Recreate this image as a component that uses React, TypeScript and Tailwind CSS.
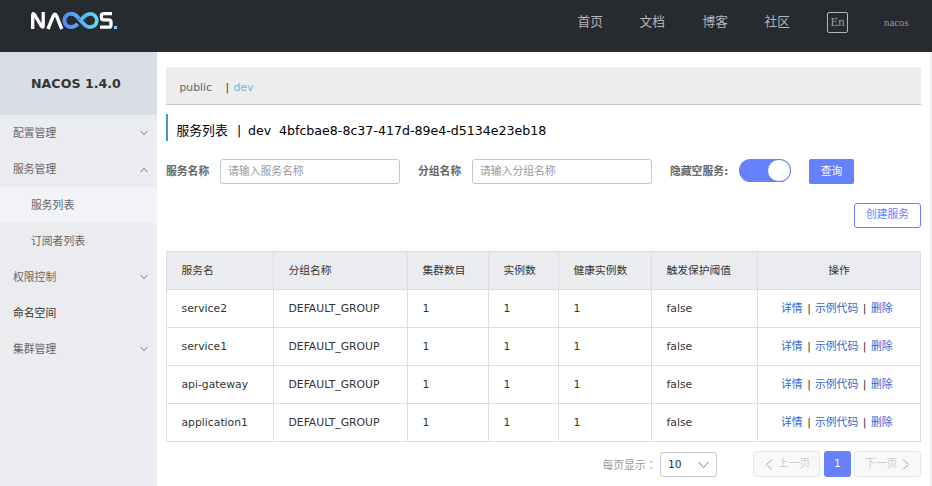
import React from "react";

const sans = "font-['DejaVu_Sans','Noto_Sans_CJK_SC',sans-serif]";

function Logo() {
  return (
    <svg width="88" height="20" viewBox="0 0 88 20" fill="none" className="block">
      <defs>
        <linearGradient id="loop" gradientUnits="userSpaceOnUse" x1="33" y1="0" x2="69" y2="0">
          <stop offset="0" stopColor="#5688f8" />
          <stop offset="0.5" stopColor="#5aaef6" />
          <stop offset="1" stopColor="#5fe0ee" />
        </linearGradient>
      </defs>
      <path d="M2.7 19V5.2Q2.7 2.4 4.6 4.6L11.2 15.8Q13.2 18.6 13.2 15.8V2" stroke="#fff" strokeWidth="3.3" />
      <path d="M18 19L23.2 6.2Q24.9 2 26.6 6.2L31.8 19" stroke="#fff" strokeWidth="3.4" />
      <path
        d="M47.6 13.9Q44.6 17.1 41 17.1A6.6 6.6 0 0 1 41 3.8Q44.6 3.8 47.4 6.9L49 8.6"
        stroke="url(#loop)"
        strokeWidth="3.9"
      />
      <path
        d="M50.3 10.4L53.8 6.9Q56.8 3.8 60.2 3.8A6.6 6.6 0 0 1 60.2 17.1Q56.8 17.1 53.8 13.9L50.3 10.4Z"
        stroke="url(#loop)"
        strokeWidth="3.7"
      />
      <path d="M82 3.7H73.8Q71.4 3.7 71.4 6V7.6Q71.4 9.9 73.8 9.9H78.6Q81 9.9 81 12.3V14.9Q81 17.2 78.6 17.2H70" stroke="#fff" strokeWidth="3.3" />
      <rect x="84" y="16" width="3" height="3" fill="#5fe0ee" />
    </svg>
  );
}

type ArrowProps = { d: string; w: number; h: number; color: string };
function Arrow({ d, w, h, color }: ArrowProps) {
  return (
    <svg width={w} height={h} viewBox={`0 0 ${w} ${h}`} fill="none" stroke={color} className="block shrink-0">
      <path d={d} />
    </svg>
  );
}

const menu = [
  { text: "配置管理", kind: "down" },
  { text: "服务管理", kind: "up" },
  { text: "服务列表", kind: "active" },
  { text: "订阅者列表", kind: "sub" },
  { text: "权限控制", kind: "down" },
  { text: "命名空间", kind: "plain" },
  { text: "集群管理", kind: "down" },
];

function Sidebar() {
  return (
    <aside className="w-[157px] shrink-0 bg-[#ebecf0]">
      <div className="flex h-[63px] items-center bg-[#d9dde6] pl-[31px] text-[12.65px] font-bold text-[#333]">NACOS 1.4.0</div>
      {menu.map((m) => (
        <div
          key={m.text}
          className={`flex h-9 items-center justify-between pr-[9px] ${
            m.kind === "active" ? "bg-[#f1f3f7] pl-[31px]" : m.kind === "sub" ? "pl-[31px]" : "pl-[13px]"
          } ${m.kind === "plain" ? "text-[#333]" : "text-[#666]"}`}
        >
          <span className="pt-px">{m.text}</span>
          {m.kind === "down" && <Arrow w={8} h={6} d="M.7 1L4 4.7L7.3 1" color="#777" />}
          {m.kind === "up" && <div className="pt-[2px]"><Arrow w={8} h={6} d="M.7 5L4 1.3L7.3 5" color="#777" /></div>}
        </div>
      ))}
    </aside>
  );
}

const columns = ["服务名", "分组名称", "集群数目", "实例数", "健康实例数", "触发保护阈值"];
const grid = "grid grid-cols-[107px_134px_81px_70px_93px_106px_163px] h-[38px] border-b border-[#dcdee3]";
const cell = "flex items-center border-r border-[#dcdee3] pl-[14.5px]";
const services = ["service2", "service1", "api-gateway", "application1"];

function ServiceTable() {
  return (
    <div className="mt-[23px] w-[755px] border-l border-t border-[#dcdee3] text-[#333]">
      <div className={`${grid} bg-[#ebecf0] text-[10.75px]`}>
        {columns.map((c) => (
          <div key={c} className={`${cell} pt-px`}>{c}</div>
        ))}
        <div className="flex items-center justify-center border-r border-[#dcdee3] pt-px">操作</div>
      </div>
      {services.map((s) => (
        <div key={s} className={grid}>
          {[s, "DEFAULT_GROUP", "1", "1", "1", "false"].map((v, i) => (
            <div key={i} className={cell}>{v}</div>
          ))}
          <div className="flex items-center border-r border-[#dcdee3] pl-[23px] text-[#3567d0]">
            <span className="w-[22px]">详情</span>
            <span className="w-[12px] text-center text-[#333]">|</span>
            <span className="w-[43px]">示例代码</span>
            <span className="w-[13px] text-center text-[#333]">|</span>
            <span>删除</span>
          </div>
        </div>
      ))}
    </div>
  );
}

function Field({ text }: { text: string }) {
  return <div className="flex h-[25px] w-[180px] items-center rounded-[3px] border border-[#c4c6cf] pl-[7px] pt-px text-[#999]">{text}</div>;
}

export default function App() {
  return (
    <div className={`flex h-[486px] w-[932px] flex-col overflow-hidden whitespace-nowrap bg-white text-[10.8px] leading-[16px] ${sans}`}>
      <header className="flex h-[52px] shrink-0 bg-[#272a2f] text-[#b5b6b8]">
        <div className="w-[577.5px] pl-[30px] pt-[10px]"><Logo /></div>
        <nav className="flex pt-[14px] text-[12.7px]">
          <span className="w-[62px]">首页</span>
          <span className="w-[63px]">文档</span>
          <span className="w-[62px]">博客</span>
          <span className="w-[62.5px]">社区</span>
        </nav>
        <div className="mt-3 flex h-[21px] w-[21px] items-center justify-center rounded-[2px] border border-[#b5b6b8] pb-[2px] font-['Liberation_Serif',serif] text-[12.6px] text-[#9b9da0]">En</div>
        <span className="ml-9 mt-[14px] font-['Liberation_Serif',serif] text-[10.8px] text-[#96989b]">nacos</span>
      </header>
      <div className="flex grow">
        <Sidebar />
        <main className="flex w-[773px] shrink-0 flex-col pl-[9px] pt-[15px]">
          <div className="flex h-[38px] w-[755px] items-center border-b border-[#c7c7c7] bg-[#ededed] pl-[13.5px] pt-[5px] text-[#666]">
            <span className="w-[46px]">public</span>
            <span className="w-[8px] text-[#333]">|</span>
            <span className="text-[#5bc0de]">dev</span>
          </div>
          <div className="mt-[9px] flex h-[27px] items-center whitespace-pre border-l-2 border-[#4299c8] pl-[8.5px] pt-[6px] text-[12.6px] text-black">
            <span className="w-[60.5px] text-[12.8px]">服务列表</span>
            <span className="w-[11px]">|</span>
            <span className="w-[31px]">dev</span>
            <span>4bfcbae8-8c37-417d-89e4-d5134e23eb18</span>
          </div>
          <div className="mt-[18px] flex h-[25px] items-center font-normal">
            <span className="w-[54px] pt-px font-bold text-[#666]">服务名称</span>
            <Field text="请输入服务名称" />
            <span className="ml-[18px] w-[54px] pt-px font-bold text-[#666]">分组名称</span>
            <Field text="请输入分组名称" />
            <span className="ml-[18px] w-[69px] pt-px font-bold text-[#666]">隐藏空服务:</span>
            <div className="mb-[2px] flex h-[23px] w-[52px] justify-end rounded-full bg-[#6581fb] p-px">
              <span className="h-[21px] w-[22px] rounded-full bg-white" />
            </div>
            <div className="ml-[18px] flex h-[25px] w-[45px] items-center justify-center rounded-[2px] bg-[#6581fb] pt-px text-white">查询</div>
          </div>
          <div className="mt-[19px] flex w-[755px] justify-end">
            <div className="flex h-[25px] w-[67px] items-center justify-center rounded-[3px] border border-[#6581fb] pb-px text-[#6581fb]">创建服务</div>
          </div>
          <ServiceTable />
          <div className="mt-[9px] flex h-[26px] w-[755px] items-center">
            <span className="ml-[436.5px] w-[57.5px] pt-px text-[#999]">每页显示<span className="font-['Noto_Sans_CJK_TC',sans-serif]" lang="zh-TW">：</span></span>
            <div className="mt-px flex h-[25px] w-[57px] items-center justify-between rounded-[3px] border border-[#c4c6cf] pl-[7px] pr-[7px] text-[#333]">
              10<Arrow w={11} h={8} d="M.7 1L5.5 6.7L10.3 1" color="#888" />
            </div>
            <div className="ml-9 flex h-[26px] w-[67px] items-center gap-[5px] rounded-[3px] border border-[#e6e7eb] bg-[#f7f8fa] pl-[11px] text-[#ccc]">
              <Arrow w={8} h={11} d="M7 .7L1.3 5.5L7 10.3" color="#aaa" />上一页
            </div>
            <div className="ml-1 flex h-[26px] w-[27px] items-center justify-center rounded-[3px] bg-[#6581fb] text-white">1</div>
            <div className="ml-[3px] flex h-[26px] w-[67px] items-center gap-[5px] rounded-[3px] border border-[#e6e7eb] bg-[#f7f8fa] pl-[10px] text-[#ccc]">
              下一页<Arrow w={8} h={11} d="M1 .7L6.7 5.5L1 10.3" color="#aaa" />
            </div>
          </div>
        </main>
        <div className="w-[2px] shrink-0 bg-[#f1f1f1]" />
      </div>
    </div>
  );
}
